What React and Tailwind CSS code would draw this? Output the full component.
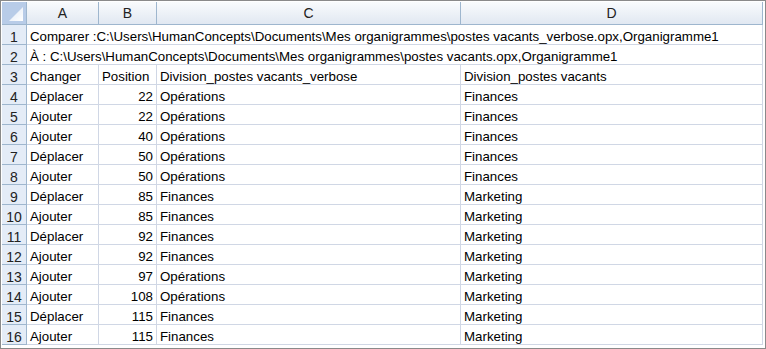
import React from "react";

const rows = [
  ["Déplacer", "22", "Opérations", "Finances"],
  ["Ajouter", "22", "Opérations", "Finances"],
  ["Ajouter", "40", "Opérations", "Finances"],
  ["Déplacer", "50", "Opérations", "Finances"],
  ["Ajouter", "50", "Opérations", "Finances"],
  ["Déplacer", "85", "Finances", "Marketing"],
  ["Ajouter", "85", "Finances", "Marketing"],
  ["Déplacer", "92", "Finances", "Marketing"],
  ["Ajouter", "92", "Finances", "Marketing"],
  ["Ajouter", "97", "Opérations", "Marketing"],
  ["Ajouter", "108", "Opérations", "Marketing"],
  ["Déplacer", "115", "Finances", "Marketing"],
  ["Ajouter", "115", "Finances", "Marketing"],
];

const cell = "h-[20px] border-r border-b border-[#d0d7e5] px-[3px] pt-[3px] leading-[18px] whitespace-nowrap overflow-hidden";
const rh = "h-[20px] border-r border-b border-[#9eb6ce] bg-[#e4ecf7] text-center pt-[3px] leading-[18px] text-[#222] text-[14px]";
const ch = "h-[23px] border-r border-b border-[#9eb6ce] bg-gradient-to-b from-[#f9fbfd] to-[#e1e8f2] text-center leading-[23px] text-[#222] text-[14px]";

export default function App() {
  return (
    <div className="w-[766px] h-[349px] border border-[#8a8a8a] bg-white p-[1px] overflow-hidden text-[13.3px] text-black" style={{ fontFamily: '"Liberation Sans", Arial, sans-serif' }}>
      <div className="grid grid-cols-[25px_72px_58px_304px_302px]">
        <div className="h-[23px] border-r border-b border-[#9eb6ce] bg-[#b8cce8] relative">
          <svg className="absolute right-[3px] bottom-[3px]" width="14" height="14" viewBox="0 0 14 14">
            <defs>
              <linearGradient id="tg" x1="0" y1="0" x2="1" y2="1">
                <stop offset="0" stopColor="#dfe8f5" />
                <stop offset="1" stopColor="#ffffff" />
              </linearGradient>
            </defs>
            <polygon points="14,0 14,14 0,14" fill="url(#tg)" />
          </svg>
        </div>
        <div className={ch}>A</div>
        <div className={ch}>B</div>
        <div className={ch}>C</div>
        <div className={ch}>D</div>

        <div className={rh}>1</div>
        <div className={`${cell} col-span-4`}>Comparer :C:\Users\HumanConcepts\Documents\Mes organigrammes\postes vacants_verbose.opx,Organigramme1</div>
        <div className={rh}>2</div>
        <div className={`${cell} col-span-4`}>À : C:\Users\HumanConcepts\Documents\Mes organigrammes\postes vacants.opx,Organigramme1</div>
        <div className={rh}>3</div>
        <div className={cell}>Changer</div>
        <div className={cell}>Position</div>
        <div className={cell}>Division_postes vacants_verbose</div>
        <div className={cell}>Division_postes vacants</div>

        {rows.map((r, i) => (
          <React.Fragment key={i}>
            <div className={rh}>{i + 4}</div>
            <div className={cell}>{r[0]}</div>
            <div className={`${cell} text-right`}>{r[1]}</div>
            <div className={cell}>{r[2]}</div>
            <div className={cell}>{r[3]}</div>
          </React.Fragment>
        ))}
      </div>
    </div>
  );
}
